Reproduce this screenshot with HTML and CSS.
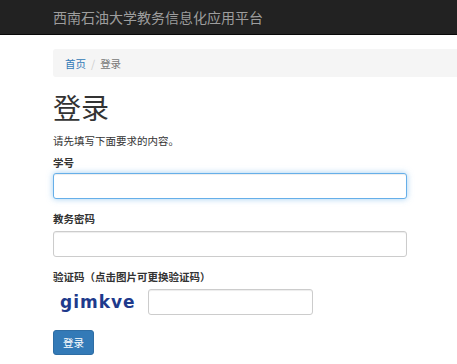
FILE: index.html
```html
<!DOCTYPE html>
<html lang="zh-CN">
<head>
  <meta charset="UTF-8">
  <meta name="viewport" content="width=device-width, initial-scale=1.0">
  <title>登录</title>
  <link rel="stylesheet" href="styles.css">
</head>
<body>
  <nav class="navbar">
    <div class="container">
      <span class="brand">西南石油大学教务信息化应用平台</span>
    </div>
  </nav>

  <div class="container">
    <ol class="breadcrumb">
      <li><a href="#">首页</a></li>
      <li class="active">登录</li>
    </ol>

    <h1>登录</h1>
    <p class="hint">请先填写下面要求的内容。</p>

    <form class="login-form">
      <div class="form-group">
        <label for="sid">学号</label>
        <input type="text" id="sid" class="form-control focused">
      </div>
      <div class="form-group">
        <label for="pwd">教务密码</label>
        <input type="password" id="pwd" class="form-control">
      </div>
      <div class="form-group">
        <label for="code">验证码（点击图片可更换验证码）</label>
        <div class="captcha-row">
          <span class="captcha">gimkve</span>
          <input type="text" id="code" class="form-control short">
        </div>
      </div>
      <button type="button" class="btn">登录</button>
    </form>
  </div>
</body>
</html>
```

FILE: styles.css
```css
body {
  margin: 0;
  background: #fff;
  color: #333;
  font-family: "Noto Sans CJK SC", "Liberation Sans", sans-serif;
  font-size: 10.5px;
}

.container {
  padding-left: 53px;
}

.navbar {
  background: #222;
  height: 34px;
  border-bottom: 1px solid #080808;
}

.brand {
  display: block;
  color: #9d9d9d;
  font-size: 14px;
  line-height: 34px;
}

.breadcrumb {
  list-style: none;
  margin: 14px 0 0;
  padding: 0 12px;
  height: 28px;
  display: flex;
  align-items: center;
  background: #f5f5f5;
  border-radius: 3px 0 0 3px;
}

.breadcrumb li + li::before {
  content: "/";
  color: #ccc;
  padding: 0 5px;
}

.breadcrumb a {
  color: #337ab7;
  text-decoration: none;
}

.breadcrumb .active {
  color: #777;
}

h1 {
  margin: 13px 0 0;
  font-size: 28px;
  font-weight: 400;
  line-height: 34px;
}

.hint {
  margin: 9px 0 0;
  line-height: 16px;
}

.login-form {
  width: 354px;
}

.form-group {
  margin-top: 6px;
}

label {
  display: block;
  font-weight: 700;
  line-height: 16px;
  margin-bottom: 4px;
}

.form-group:first-child label {
  margin-bottom: 2px;
}

.form-group + .form-group {
  margin-top: 12px;
}

.form-control {
  display: block;
  box-sizing: border-box;
  width: 100%;
  height: 26px;
  margin: 0;
  border: 1px solid #ccc;
  border-radius: 3px;
  box-shadow: inset 0 1px 1px rgba(0, 0, 0, 0.075);
  font: inherit;
}

.form-control.focused {
  border-color: #66afe9;
  box-shadow: inset 0 1px 1px rgba(0, 0, 0, 0.075), 0 0 6px rgba(102, 175, 233, 0.6);
}

.captcha-row {
  display: flex;
  align-items: center;
  gap: 13px;
}

.captcha {
  width: 75px;
  margin-left: 7px;
  font-family: "DejaVu Sans", sans-serif;
  font-weight: 700;
  font-size: 17px;
  letter-spacing: 1px;
  color: #1e3a8c;
}

.form-control.short {
  width: 165px;
}

.btn {
  margin-top: 15px;
  height: 25px;
  padding: 0 9px;
  background: #337ab7;
  border: 1px solid #2e6da4;
  border-radius: 3px;
  color: #fff;
  font: inherit;
}
```
